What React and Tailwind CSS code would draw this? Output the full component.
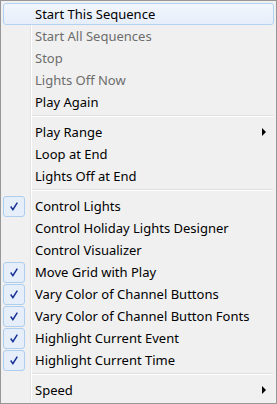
const items = [
  { label: "Start This Sequence", hot: true },
  { label: "Start All Sequences", disabled: true },
  { label: "Stop", disabled: true },
  { label: "Lights Off Now", disabled: true },
  { label: "Play Again" },
  { sep: true },
  { label: "Play Range", sub: true },
  { label: "Loop at End" },
  { label: "Lights Off at End" },
  { sep: true },
  { label: "Control Lights", checked: true },
  { label: "Control Holiday Lights Designer" },
  { label: "Control Visualizer" },
  { label: "Move Grid with Play", checked: true },
  { label: "Vary Color of Channel Buttons", checked: true },
  { label: "Vary Color of Channel Button Fonts", checked: true },
  { label: "Highlight Current Event", checked: true },
  { label: "Highlight Current Time", checked: true },
  { sep: true },
  { label: "Speed", sub: true },
];

const Check = () => (
  <div className="w-[22px] h-[21px] rounded-[3px] border border-[#aeceef] bg-[#e6eef9] flex items-center justify-center">
    <svg width="8" height="9" viewBox="0 0 8 9">
      <path d="M0.7 4.5 L2.9 7.6 L7.3 0.6" fill="none" stroke="#142f96" strokeWidth="1.5" />
    </svg>
  </div>
);

const Gutter = ({ children }) => (
  <div className="w-[28px] shrink-0 border-r border-r-[#e2e3e3] flex items-center">{children}</div>
);

const Row = ({ item }) => {
  if (item.sep) {
    return (
      <div className="flex h-[8px]">
        <Gutter />
        <div className="flex-1 border-l border-l-white pt-[2px]">
          <div className="h-[2px] border-t border-t-[#e0e0e0] border-b border-b-white mr-[1px]" />
        </div>
      </div>
    );
  }

  const text = (
    <span className={item.disabled ? "text-[#6d6d6d]" : "text-black"}>{item.label}</span>
  );

  if (item.hot) {
    return (
      <div className="h-[22px] flex items-center rounded-[3px] border border-[#b3d2f2] bg-gradient-to-b from-[#f2f6fc] to-[#e6eefa] pl-[31px]">
        {text}
      </div>
    );
  }

  return (
    <div className="flex h-[22px]">
      <Gutter>{item.checked && <Check />}</Gutter>
      <div className="flex-1 border-l border-l-white flex items-center justify-between pl-[3px] pr-[8px]">
        {text}
        {item.sub && (
          <div className="w-0 h-0 border-y-[4px] border-y-transparent border-l-[4px] border-l-black" />
        )}
      </div>
    </div>
  );
};

export default function App() {
  return (
    <div
      className="w-[277px] h-[404px] border border-[#979797] bg-[#f0f0f0] p-[2px] text-[13px] leading-none"
      style={{ fontFamily: '"Noto Sans", sans-serif' }}
    >
      {items.map((item, i) => (
        <Row key={i} item={item} />
      ))}
    </div>
  );
}
